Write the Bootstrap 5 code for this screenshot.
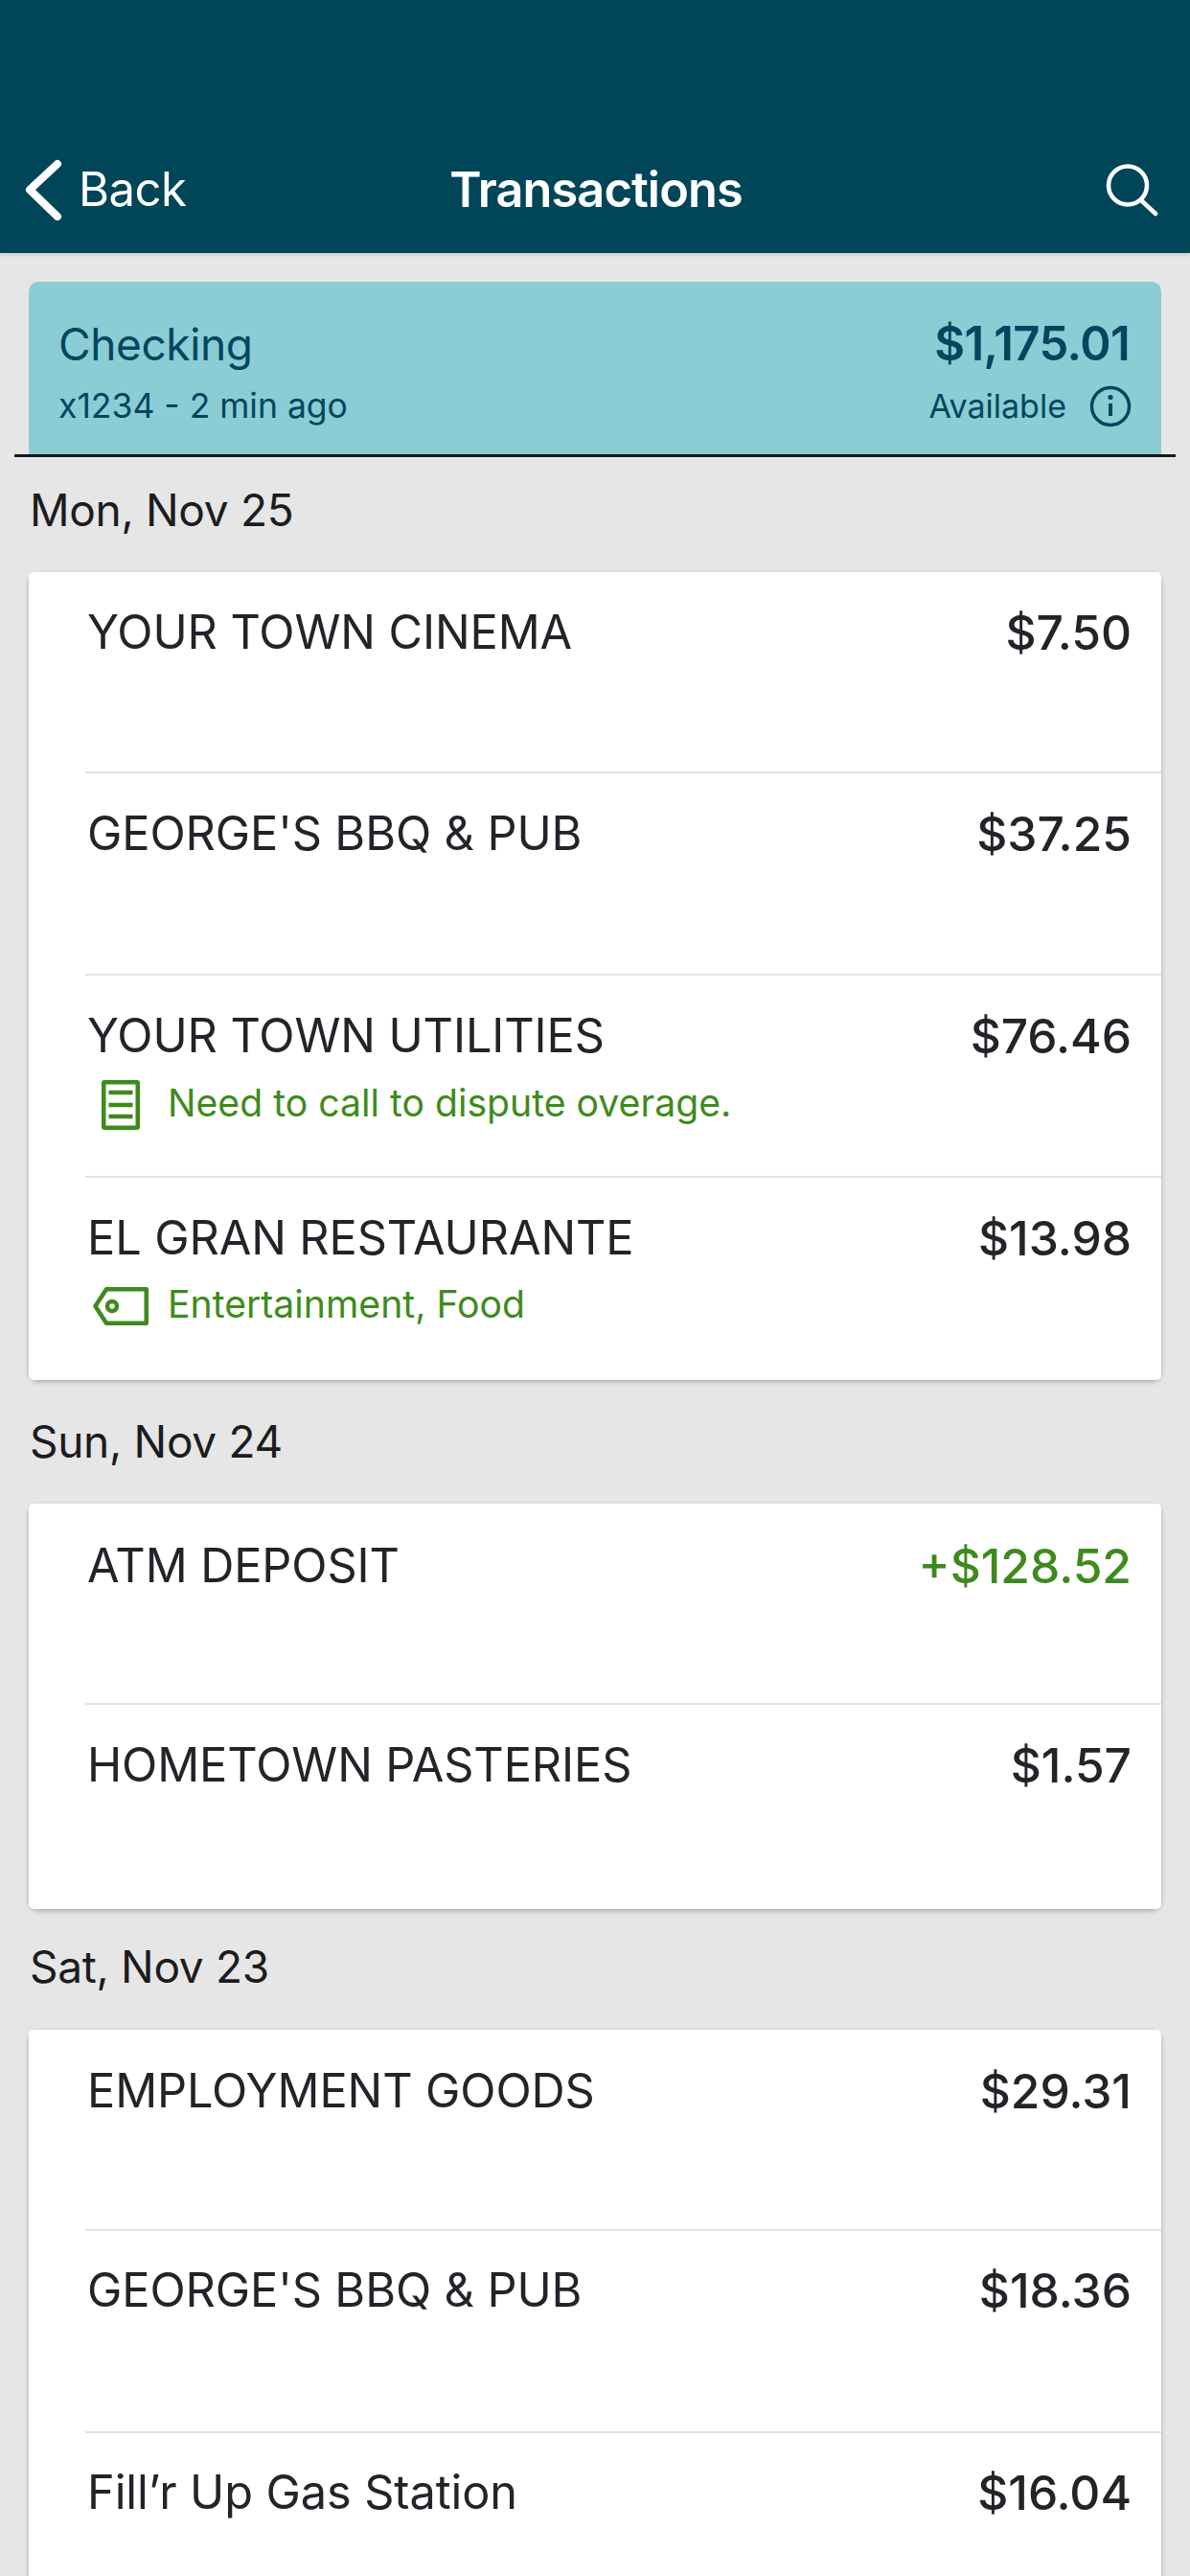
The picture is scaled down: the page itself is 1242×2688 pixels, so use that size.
<!DOCTYPE html>
<html lang="en">
<head>
    <meta charset="UTF-8">
    <meta name="viewport" content="width=device-width, initial-scale=1.0">
    <title>Transactions</title>
    <link href="https://cdn.jsdelivr.net/npm/bootstrap@5.3.0/dist/css/bootstrap.min.css" rel="stylesheet">
    <style>
        html, body {
            height: 2688px;
            overflow: hidden;
        }

        body {
            background-color: #e6e6e6;
            font-family: Inter, "Liberation Sans", sans-serif;
            color: #1c1c1e;
        }

        .top-bar {
            height: 264px;
            padding: 168px 31px 0 26px;
            background-color: #014558;
            color: #fff;
            box-shadow: 0 2px 4px rgba(0, 0, 0, .12);
        }

        .top-side {
            width: 300px;
            height: 60px;
        }

        .top-back {
            font-size: 49px;
            letter-spacing: -.5px;
        }

        .top-title {
            margin-left: 7px;
            font-size: 50.5px;
            line-height: 60px;
            font-weight: 600;
            letter-spacing: -.9px;
        }

        .acct-wrap {
            padding: 30px 15px 0;
        }

        .acct-box {
            height: 180px;
            margin: 0 15px;
            padding: 36px 33px 0 31px;
            background-color: #8bcdd5;
            color: #01475e;
            border-radius: 10px 10px 0 0;
        }

        .acct-name {
            font-size: 46px;
            line-height: 58px;
            letter-spacing: -.4px;
        }

        .acct-amt {
            font-size: 49px;
            line-height: 58px;
            font-weight: 600;
            letter-spacing: -.6px;
        }

        .acct-sub {
            font-size: 35.5px;
            line-height: 50px;
            margin-top: 11px;
        }

        .acct-avail {
            font-size: 34px;
            margin-right: -2px;
        }

        .acct-rule {
            height: 3px;
            background-color: #15181c;
        }

        .day-label {
            height: 129px;
            padding-left: 31px;
            padding-bottom: 2px;
            font-size: 46px;
            letter-spacing: -.3px;
            line-height: 56px;
            display: flex;
            align-items: center;
        }

        .day-first {
            height: 120px;
            padding-bottom: 10px;
        }

        .day-third {
            height: 126px;
            padding-bottom: 6px;
        }

        .day-list {
            margin: 0 30px;
            border: 0;
            border-radius: 10px;
            box-shadow: 0 2px 5px rgba(0, 0, 0, .28);
        }

        .txn-row {
            height: 211px;
            padding: 36px 31px 0 61px;
            border: 0;
            position: relative;
        }

        .txn-row:first-child {
            height: 208px;
            padding-top: 34px;
        }

        .txn-row:last-child {
            height: 213px;
        }

        .list-sun .txn-row:first-child {
            padding-top: 36px;
        }

        .list-sun .txn-row:last-child {
            height: 215px;
        }

        .list-sat .txn-row,
        .list-sat .txn-row:first-child {
            padding-top: 35px;
        }

        .txn-row + .txn-row::before {
            content: "";
            position: absolute;
            top: 0;
            left: 59px;
            right: 0;
            height: 2px;
            background-color: #e3e3e3;
        }

        .txn-name {
            font-size: 48.7px;
            line-height: 58px;
            letter-spacing: -.1px;
        }

        .txn-amt {
            font-size: 49.7px;
            line-height: 58px;
            font-weight: 500;
        }

        .txn-in {
            color: #3f8a1d;
        }

        .txn-note {
            font-size: 39.2px;
            line-height: 50px;
            margin-top: 12px;
            margin-left: -61px;
            color: #3f8a1d;
        }

        .txn-note-tag {
            margin-top: 15px;
        }

        .note-icon {
            width: 145px;
            padding-left: 76px;
        }

        .note-icon svg {
            display: block;
            margin-top: 5px;
        }

        .note-icon .tag-icon {
            margin-top: 3px;
            margin-left: -9px;
        }
    </style>
</head>

<body>
    <nav class="top-bar d-flex justify-content-between align-items-start">
        <a class="top-side d-flex align-items-center gap-3 text-white text-decoration-none top-back" href="#">
            <svg width="40" height="64" viewBox="0 0 40 64" fill="none" stroke="#fff" stroke-width="8" stroke-linecap="round" stroke-linejoin="round"><path d="M34 5 5 32l29 28"/></svg>
            <span>Back</span>
        </a>
        <div class="top-title">Transactions</div>
        <div class="top-side d-flex justify-content-end">
            <svg width="58" height="58" viewBox="0 0 58 58" fill="none" stroke="#fff" stroke-width="4.5" stroke-linecap="round"><circle cx="24" cy="25.5" r="20"/><path d="m38 41 15 14"/></svg>
        </div>
    </nav>

    <div class="acct-wrap">
        <div class="acct-box">
            <div class="d-flex justify-content-between">
                <span class="acct-name">Checking</span>
                <span class="acct-amt">$1,175.01</span>
            </div>
            <div class="d-flex justify-content-between align-items-center acct-sub">
                <span>x1234 - 2 min ago</span>
                <span class="d-flex align-items-center gap-4 acct-avail">Available
                    <svg width="44" height="44" viewBox="0 0 44 44" fill="none" stroke="#01475e" stroke-width="3.5"><circle cx="22" cy="22" r="19.5"/><path d="M22 19v13" stroke-width="4"/><circle cx="22" cy="12.5" r="2.6" fill="#01475e" stroke="none"/></svg>
                </span>
            </div>
        </div>
        <div class="acct-rule"></div>
    </div>

    <div class="day-label day-first">Mon, Nov 25</div>
    <div class="card day-list">
        <div class="list-group list-group-flush">
            <div class="list-group-item txn-row">
                <div class="d-flex justify-content-between"><span class="txn-name">YOUR TOWN CINEMA</span><span class="txn-amt">$7.50</span></div>
            </div>
            <div class="list-group-item txn-row">
                <div class="d-flex justify-content-between"><span class="txn-name">GEORGE'S BBQ &amp; PUB</span><span class="txn-amt">$37.25</span></div>
            </div>
            <div class="list-group-item txn-row">
                <div class="d-flex justify-content-between"><span class="txn-name">YOUR TOWN UTILITIES</span><span class="txn-amt">$76.46</span></div>
                <div class="d-flex align-items-center txn-note">
                    <span class="note-icon"><svg width="40" height="52" viewBox="0 0 40 52" fill="none" stroke="#3f8a1d" stroke-width="4.5"><rect x="2.250" y="2.250" width="35.500" height="47.500" rx="1"/><path d="M7.500 13h25M7.500 26h25M7.500 38h25"/></svg></span>
                    <span>Need to call to dispute overage.</span>
                </div>
            </div>
            <div class="list-group-item txn-row">
                <div class="d-flex justify-content-between"><span class="txn-name">EL GRAN RESTAURANTE</span><span class="txn-amt">$13.98</span></div>
                <div class="d-flex align-items-center txn-note txn-note-tag">
                    <span class="note-icon"><svg class="tag-icon" width="58" height="40" viewBox="0 0 58 40" fill="none" stroke="#3f8a1d" stroke-width="4.5" stroke-linejoin="round"><path d="M55.750 2.250v35.500H14L2.500 20 14 2.250z"/><circle cx="20" cy="20" r="5"/></svg></span>
                    <span>Entertainment, Food</span>
                </div>
            </div>
        </div>
    </div>

    <div class="day-label">Sun, Nov 24</div>
    <div class="card day-list list-sun">
        <div class="list-group list-group-flush">
            <div class="list-group-item txn-row">
                <div class="d-flex justify-content-between"><span class="txn-name">ATM DEPOSIT</span><span class="txn-amt txn-in">+$128.52</span></div>
            </div>
            <div class="list-group-item txn-row">
                <div class="d-flex justify-content-between"><span class="txn-name">HOMETOWN PASTERIES</span><span class="txn-amt">$1.57</span></div>
            </div>
        </div>
    </div>

    <div class="day-label day-third">Sat, Nov 23</div>
    <div class="card day-list list-sat">
        <div class="list-group list-group-flush">
            <div class="list-group-item txn-row">
                <div class="d-flex justify-content-between"><span class="txn-name">EMPLOYMENT GOODS</span><span class="txn-amt">$29.31</span></div>
            </div>
            <div class="list-group-item txn-row">
                <div class="d-flex justify-content-between"><span class="txn-name">GEORGE'S BBQ &amp; PUB</span><span class="txn-amt">$18.36</span></div>
            </div>
            <div class="list-group-item txn-row">
                <div class="d-flex justify-content-between"><span class="txn-name">Fill’r Up Gas Station</span><span class="txn-amt">$16.04</span></div>
            </div>
        </div>
    </div>

    <script src="https://cdn.jsdelivr.net/npm/bootstrap@5.3.0/dist/js/bootstrap.bundle.min.js"></script>
</body>
</html>
